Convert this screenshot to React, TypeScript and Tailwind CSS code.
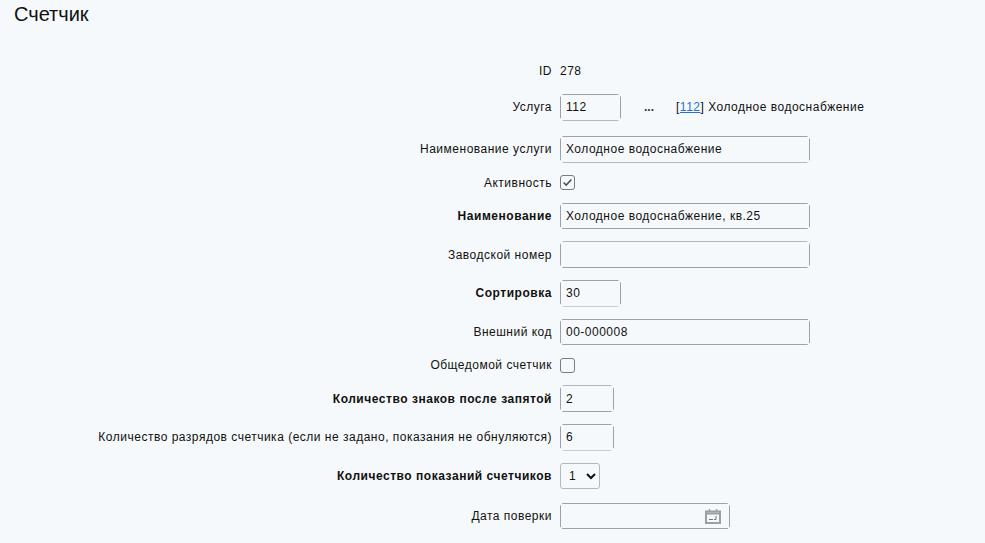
import React from 'react'

const labelClass = 'w-[552px] shrink-0 text-right leading-[16px]'

// the reference boxes have open corners, only the four edges are drawn
const cutCorners =
  '[clip-path:polygon(3px_0,calc(100%-3px)_0,100%_3px,100%_calc(100%-3px),calc(100%-3px)_100%,3px_100%,0_calc(100%-3px),0_3px)]'

const Row = ({ label, bold, children }: { label: string; bold?: boolean; children: React.ReactNode }) => (
  <div className="flex items-center gap-2">
    <label className={`${labelClass} ${bold ? 'font-bold tracking-[0.53px]' : 'tracking-[0.5px]'}`}>{label}</label>
    {children}
  </div>
)

const Field = ({ value, width }: { value?: string; width: string }) => (
  <input
    readOnly
    defaultValue={value}
    className={`${width} h-[26.67px] px-[5px] bg-transparent border border-[#9ca2ad] outline-none tracking-[0.5px] text-[#111] ${cutCorners}`}
  />
)

const Checkbox = ({ checked }: { checked?: boolean }) => (
  <span className="flex items-center justify-center w-[15px] h-[15px] border border-[#777b82] rounded-[3px]">
    {checked && (
      <svg viewBox="0 0 15 15" className="w-[13px] h-[13px]" fill="none" stroke="#4d5157" strokeWidth="1.8">
        <path d="M3 7.5 L6 10.5 L12 4" />
      </svg>
    )}
  </span>
)

export default function App() {
  return (
    <div className="h-[543px] overflow-hidden bg-[#f6f9fb] text-[12px] text-[#111] tracking-[0.5px] font-['Liberation_Sans',Arial,sans-serif]">
      <h1 className="pl-[14px] pt-[2px] h-[62px] text-[20px] leading-[24px] tracking-normal">Счетчик</h1>
      <div className="flex flex-col gap-3">
        <div className="mb-[2px]">
          <Row label="ID">
            <span className="leading-[18px]">278</span>
          </Row>
        </div>
        <div className="mb-[3.33px]">
          <Row label="Услуга">
            <Field value="112" width="w-[61px]" />
            <span className="ml-[15px] w-[18px] leading-none text-[#333] font-bold tracking-normal">...</span>
            <span className="ml-[6px]">
              [<a href="#" className="text-[#2a6fd6] underline">112</a>] Холодное водоснабжение
            </span>
          </Row>
        </div>
        <Row label="Наименование услуги">
          <Field value="Холодное водоснабжение" width="w-[250px]" />
        </Row>
        <Row label="Активность">
          <Checkbox checked />
        </Row>
        <Row label="Наименование" bold>
          <Field value="Холодное водоснабжение, кв.25" width="w-[250px]" />
        </Row>
        <Row label="Заводской номер">
          <Field width="w-[250px]" />
        </Row>
        <Row label="Сортировка" bold>
          <Field value="30" width="w-[61px]" />
        </Row>
        <Row label="Внешний код">
          <Field value="00-000008" width="w-[250px]" />
        </Row>
        <Row label="Общедомой счетчик">
          <Checkbox />
        </Row>
        <Row label="Количество знаков после запятой" bold>
          <Field value="2" width="w-[54px]" />
        </Row>
        <Row label="Количество разрядов счетчика (если не задано, показания не обнуляются)">
          <Field value="6" width="w-[54px]" />
        </Row>
        <div className="mb-[1.5px]">
          <Row label="Количество показаний счетчиков" bold>
            <div className="relative w-[40px] h-[26.67px]">
              <select className="appearance-none w-full h-full pl-[8px] bg-transparent border border-[#b4b8bd] rounded-[3px] outline-none">
                <option>1</option>
              </select>
              <svg viewBox="0 0 10 7" className="absolute right-[4px] top-[10px] w-[10px] h-[7px] pointer-events-none" fill="none" stroke="#111" strokeWidth="2">
                <path d="M1 1 L5 5 L9 1" />
              </svg>
            </div>
          </Row>
        </div>
        <Row label="Дата поверки">
          <div className="relative w-[170px] h-[26.67px]">
            <input readOnly className={`w-full h-full bg-transparent border border-[#9ca2ad] outline-none ${cutCorners}`} />
            <svg viewBox="0 0 16 15" className="absolute right-[9px] top-[6px] w-[16px] h-[15px] pointer-events-none" fill="none" stroke="#9a9ea5">
              <rect x="1" y="2.5" width="14" height="11.5" strokeWidth="2" />
              <path d="M1 4.5 H15" strokeWidth="2" />
              <path d="M4.5 0 V3 M11.5 0 V3" strokeWidth="1.4" />
              <path d="M4 10.5 H8 M9 10.5 H11 V7" stroke="#6f737a" strokeWidth="1" />
            </svg>
          </div>
        </Row>
      </div>
    </div>
  )
}
